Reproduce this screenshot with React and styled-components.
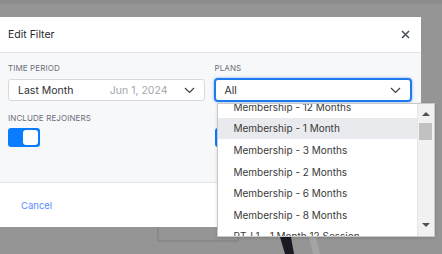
import styled, { createGlobalStyle } from 'styled-components'

const Global = createGlobalStyle`
body {
margin: 0;
font-family: "Inter", "Noto Sans", sans-serif;
}
`

const Page = styled.div`
position: relative;
width: 442px;
height: 254px;
overflow: hidden;
background-color: #959595;
padding-top: 17px;
box-sizing: border-box;
`

const Backdrop = styled.svg`
position: absolute;
left: 0;
top: 0;
`

const Modal = styled.div`
position: relative;
width: 421px;
background-color: #f7f8fa;
`

const Header = styled.div`
height: 35px;
display: flex;
align-items: center;
justify-content: space-between;
padding: 0 10px 0 8px;
background-color: white;
border-bottom: 1px solid #dfe2e6;
`

const Title = styled.div`
font-size: 10.5px;
color: #27272f;
`

const Close = styled.svg`
display: block;
margin-right: 1px;
`

const Body = styled.div`
display: grid;
grid-template-columns: 1fr 1fr;
column-gap: 10px;
padding: 10px 10px 35px 8px;
border-bottom: 1px solid #dfe2e6;
`

const Field = styled.div`
display: flex;
flex-direction: column;
margin-top: ${p => p.$top || 0}px;
`

const Label = styled.div`
font-size: 8px;
line-height: 10px;
color: #6a6f78;
letter-spacing: 0.1px;
margin-bottom: ${p => p.$gap}px;
`

const SelectWrap = styled.div`
position: relative;
`

const Select = styled.div`
height: 22px;
box-sizing: border-box;
display: flex;
align-items: center;
padding: 0 9px;
background-color: white;
border: 1px solid ${p => p.$focus ? '#1f7af0' : '#d6d9de'};
box-shadow: ${p => p.$focus ? '0 0 0 1px #1f7af0, 0 0 2px 2px rgba(31,122,240,0.25)' : 'none'};
border-radius: 3px;
font-size: 10.5px;
color: #2d2f33;
`

const Value = styled.span`
flex: 1;
`

const Hint = styled.span`
color: #a3a7ae;
margin-right: 16px;
`

const Toggle = styled.div`
width: 32px;
height: 19px;
box-sizing: border-box;
padding: 2px;
display: flex;
justify-content: flex-end;
background-color: #0a7cff;
border-radius: 3px;
`

const Knob = styled.div`
width: 15px;
height: 15px;
background-color: white;
border-radius: 3px;
`

const Footer = styled.div`
height: 44px;
display: flex;
align-items: center;
padding-left: 21px;
background-color: white;
`

const Cancel = styled.span`
font-size: 9.5px;
color: #5b8cff;
`

const Dropdown = styled.div`
position: absolute;
top: calc(100% + 2px);
left: 2px;
width: 218px;
height: 134px;
display: flex;
background-color: white;
border: 1px solid #c9c9c9;
box-sizing: border-box;
box-shadow: 0 1px 3px rgba(0,0,0,0.15);
z-index: 2;
`

const List = styled.div`
flex: 1;
overflow: hidden;
`

const Scrolled = styled.div`
margin-top: -8px;
`

const Option = styled.div`
height: 21.6px;
display: flex;
align-items: center;
padding-left: 16px;
font-size: 10px;
color: #3a3a3a;
white-space: nowrap;
background-color: ${p => p.$active ? '#e8eaed' : 'white'};
`

const Scrollbar = styled.div`
width: 16px;
display: flex;
flex-direction: column;
align-items: center;
background-color: #f1f1f1;
border-left: 1px solid #e6e6e6;
`

const Arrow = styled.div`
width: 0;
height: 0;
margin: ${p => p.$down ? 'auto 0 9px' : '8px 0 0'};
border-left: 4px solid transparent;
border-right: 4px solid transparent;
${p => p.$down ? 'border-top: 4px solid #505050;' : 'border-bottom: 4px solid #505050;'}
`

const Thumb = styled.div`
width: 13px;
height: 17px;
margin-top: 7px;
background-color: #c1c1c1;
`

const Chevron = () => (
  <svg width="11" height="7" viewBox="0 0 11 7">
    <path d="M1 1l4.5 4.5L10 1" fill="none" stroke="#3c3f44" strokeWidth="1.2" />
  </svg>
)

const plans = [
  'Membership - 12 Months',
  'Membership - 1 Month',
  'Membership - 3 Months',
  'Membership - 2 Months',
  'Membership - 6 Months',
  'Membership - 8 Months',
  'PT-L1 - 1 Month 12 Session',
]

export default function App() {
  return (
    <>
      <Global />
      <Page>
        <Backdrop width="442" height="254">
          <rect x="0" y="0" width="442" height="4" fill="#8c8c8c" />
          <rect x="158" y="200" width="80" height="41" fill="none" stroke="#868686" strokeWidth="1.5" />
          <path d="M280 237 L291 237 L294 254 L285 254 Z" fill="#1a1a24" />
          <path d="M309 237 L316 237 L320 254 L313 254 Z" fill="#a4a4a4" />
        </Backdrop>
        <Modal>
          <Header>
            <Title>Edit Filter</Title>
            <Close width="9" height="9" viewBox="0 0 9 9">
              <path d="M1 1l7 7M8 1l-7 7" stroke="#4a5060" strokeWidth="1.6" />
            </Close>
          </Header>
          <Body>
            <Field>
              <Label $gap={6}>TIME PERIOD</Label>
              <Select>
                <Value>Last Month</Value>
                <Hint>Jun 1, 2024</Hint>
                <Chevron />
              </Select>
            </Field>
            <Field>
              <Label $gap={6}>PLANS</Label>
              <SelectWrap>
                <Select $focus>
                  <Value>All</Value>
                  <Chevron />
                </Select>
                <Dropdown>
                  <List>
                    <Scrolled>
                      {plans.map((p, i) => (
                        <Option key={p} $active={i === 1}>{p}</Option>
                      ))}
                    </Scrolled>
                  </List>
                  <Scrollbar>
                    <Arrow />
                    <Thumb />
                    <Arrow $down />
                  </Scrollbar>
                </Dropdown>
              </SelectWrap>
            </Field>
            <Field $top={12}>
              <Label $gap={5}>INCLUDE REJOINERS</Label>
              <Toggle><Knob /></Toggle>
            </Field>
            <Field $top={12}>
              <Label $gap={5}>{'\u00a0'}</Label>
              <Toggle><Knob /></Toggle>
            </Field>
          </Body>
          <Footer>
            <Cancel>Cancel</Cancel>
          </Footer>
        </Modal>
      </Page>
    </>
  )
}
